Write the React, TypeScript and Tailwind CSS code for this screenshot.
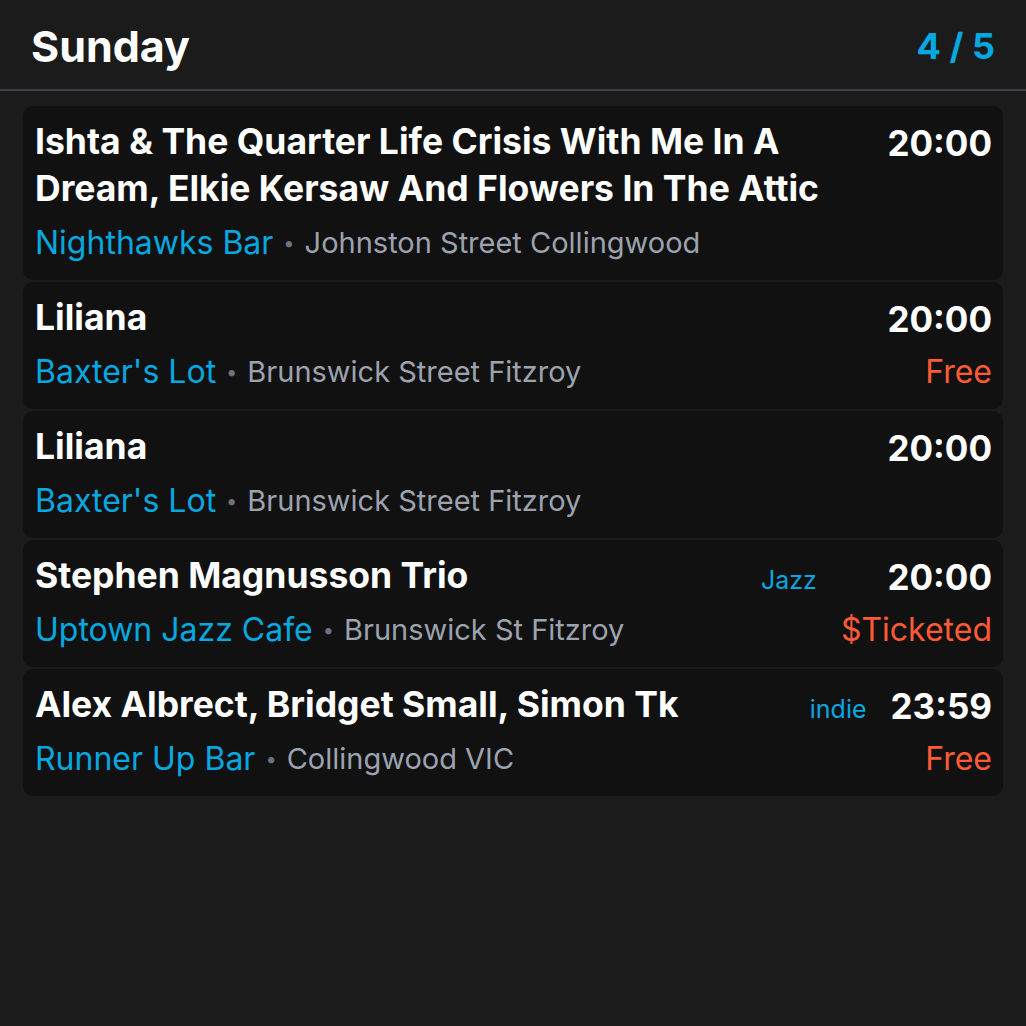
type Gig = {
  title: string;
  venue: string;
  address: string;
  time: string;
  price?: string;
  tag?: string;
};

const gigs: Gig[] = [
  {
    title: "Ishta & The Quarter Life Crisis With Me In A Dream, Elkie Kersaw And Flowers In The Attic",
    venue: "Nighthawks Bar",
    address: "Johnston Street Collingwood",
    time: "20:00",
  },
  { title: "Liliana", venue: "Baxter's Lot", address: "Brunswick Street Fitzroy", time: "20:00", price: "Free" },
  { title: "Liliana", venue: "Baxter's Lot", address: "Brunswick Street Fitzroy", time: "20:00" },
  {
    title: "Stephen Magnusson Trio",
    venue: "Uptown Jazz Cafe",
    address: "Brunswick St Fitzroy",
    time: "20:00",
    price: "$Ticketed",
    tag: "Jazz",
  },
  {
    title: "Alex Albrect, Bridget Small, Simon Tk",
    venue: "Runner Up Bar",
    address: "Collingwood VIC",
    time: "23:59",
    price: "Free",
    tag: "indie",
  },
];

const GigCard = ({ gig }: { gig: Gig }) => {
  return (
    <div className="bg-[#111111] rounded-[10px] pl-3 pr-[11px] pt-3 pb-[14px] flex items-start gap-6">
      <div className="flex-1 min-w-0">
        <h3 className="text-[35.5px] font-bold leading-[47px] text-white">{gig.title}</h3>
        <p className="text-[32px] leading-[46px] mt-2 flex items-center">
          <span className="text-[#06a8e0]">{gig.venue}</span>
          <span className="text-[#6b7280] text-[20px] mx-[10px]">•</span>
          <span className="text-[#9ca3af] text-[29px]">{gig.address}</span>
        </p>
      </div>
      {gig.tag && <span className="text-[25px] leading-[47px] text-[#06a8e0] pt-[5px]">{gig.tag}</span>}
      <div className="flex flex-col items-end">
        <span className="text-[35px] font-bold leading-[47px] text-white pt-[2px]">{gig.time}</span>
        {gig.price && <span className="text-[32px] leading-[46px] mt-[6px] text-[#ff5a36]">{gig.price}</span>}
      </div>
    </div>
  );
};

export default function App() {
  return (
    <div className="min-h-[1026px] bg-[#1b1b1b] font-['Inter',sans-serif]">
      <header className="h-[91px] flex items-center justify-between pl-[31px] pr-[31px] pt-[3px] border-b-2 border-[#3b404b]">
        <h1 className="text-[43px] font-bold text-white">Sunday</h1>
        <span className="text-[36px] font-bold text-[#06a8e0]">4 / 5</span>
      </header>
      <main className="px-[23px] pt-[15px] flex flex-col gap-[2px]">
        {gigs.map((g, i) => (
          <GigCard key={i} gig={g} />
        ))}
      </main>
    </div>
  );
}
